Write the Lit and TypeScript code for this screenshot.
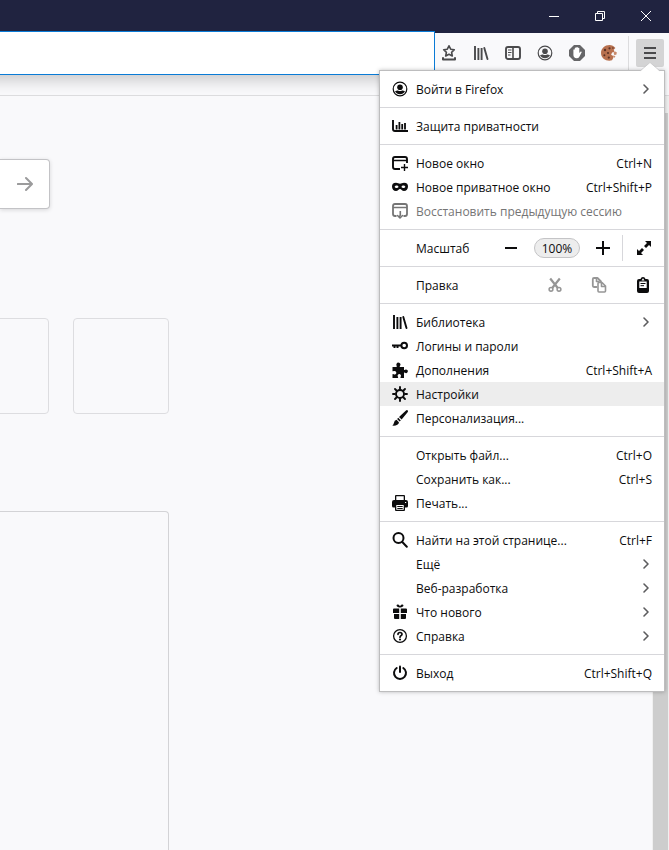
import { LitElement, html, svg, css, nothing, TemplateResult } from "lit";
import { customElement, property } from "lit/decorators.js";

const stroke = (d: string, width = 2) =>
  svg`<path d=${d} fill="none" stroke="currentColor" stroke-width=${width}></path>`;
const roundStroke = (d: string, width = 2) =>
  svg`<path d=${d} fill="none" stroke="currentColor" stroke-width=${width} stroke-linecap="round" stroke-linejoin="round"></path>`;
const fill = (d: string) => svg`<path d=${d} fill="currentColor" fill-rule="evenodd"></path>`;

const ICONS: Record<string, TemplateResult | TemplateResult[]> = {
  minimize: stroke("M3 8.5h10", 1),
  restore: stroke("M3.5 5.5h7v7h-7zM5.500 5.500v-2h7v7h-2", 1),
  close: stroke("M3 3l10 10M13 3L3 13", 1),
  bookmark: [
    roundStroke("M8 .8L9.700 4.200 13.300 4.700 10.600 7.300 11.300 11 8 9.200 4.700 11 5.400 7.300 2.700 4.700 6.300 4.200Z", 1.6),
    roundStroke("M2 13v1.600h12V13", 2),
  ],
  library: [stroke("M2 1v14M5.400 3v12M8.600 3v12", 1.9), roundStroke("M11.300 3L14.500 14", 1.9)],
  sidebar: [
    roundStroke("M3 2h10a2 2 0 0 1 2 2v8a2 2 0 0 1-2 2H3a2 2 0 0 1-2-2V4a2 2 0 0 1 2-2z", 1.9),
    stroke("M8 2v12", 1.6),
    stroke("M3 5h3.500M3 7.500h3.500M3 10h2.500", 1),
  ],
  account: [
    svg`<circle cx="8" cy="8" r="6.800" fill="none" stroke="currentColor" stroke-width="1.200"></circle>`,
    svg`<circle cx="8" cy="6.200" r="2.800" fill="currentColor"></circle>`,
    fill("M3 10.300c1-.8 2-.9 3-.9.600.400 1.300.600 2 .600s1.400-.2 2-.600c1 0 2 .1 3 .9-1 1.800-2.800 3-5 3s-4-1.200-5-3z"),
  ],
  blocker: [
    svg`<path d="M5 0h6l5 5v6l-5 5H5l-5-5V5z" fill="#666668"></path>`,
    svg`<path d="M4.400 8V4.800q.7-.9 1.400 0V3q.8-.8 1.500 0v-.7q.8-.7 1.500 0V3q.8-.7 1.500 0v5l1.400-1.500q1-.2 1 .7l-2.200 4.200q-.9 1.900-2.900 1.900-3.200-.2-3.200-3.300z" fill="#fff"></path>`,
  ],
  cookie: [
    svg`<path d="M8.500 0c2.300.1 4.400 1.200 5.900 3l-1.700 1.700.9 2-2.500.7-1 2.300 2 1.300.3 1.800-1.400 2.500C6 16.800 0 14 0 8 0 3.500 4 0 8.500 0z" fill="#b8714f"></path>`,
    svg`<path d="M12.500 7.500l1.800-1 1.600 1-.6 2.300-2 .2zM11.500 10.500l3 .6-1.300 2z" fill="#c98a6b"></path>`,
    svg`<g fill="#5a3226"><circle cx="4" cy="5" r="1.200"></circle><circle cx="8.500" cy="3.300" r="1.100"></circle><circle cx="7" cy="8" r="1.100"></circle><circle cx="3.400" cy="10.300" r="1"></circle><circle cx="7.800" cy="12.600" r="1.100"></circle><circle cx="11.900" cy="3" r=".8"></circle></g>`,
  ],
  menu: stroke("M2 3h12M2 8h12M2 13h12", 2),
  go: roundStroke("M.8 8h14M9 2L15 8 9 14", 2),
  chevron: roundStroke("M6 4l4 4-4 4", 1.6),
  chart: [stroke("M1 2v9q0 2 2 2H16", 1.9), stroke("M4.600 7v4.500M7.400 4v7.500M10.200 6v5.500M13 5v6.500", 1.8)],
  newWindow: [
    stroke("M8 14H3q-2 0-2-2V4q0-2 2-2h10q2 0 2 2v4", 1.9),
    stroke("M1 5.500h14", 1.5),
    stroke("M12.500 9v7M9 12.500h7", 1.4),
  ],
  mask: fill("M4 3.800c1.600 0 2.800.9 4 .9s2.400-.9 4-.9c3 0 4 1.600 4 3.600 0 2.600-1.600 4.600-4 4.600-2 0-2.800-2-4-2s-2 2-4 2c-2.400 0-4-2-4-4.600 0-2 1-3.600 4-3.600zM2.600 7.800c.6 1 1.200 1.300 2 1.300.9 0 1.500-.4 2-1.100-.5-.9-1.200-1.400-2.100-1.400-.8 0-1.400.4-1.900 1.200zM13.400 7.800c-.6 1-1.200 1.300-2 1.300-.9 0-1.500-.4-2-1.100.5-.9 1.200-1.400 2.100-1.400.8 0 1.400.4 1.900 1.200z"),
  restoreSession: [
    stroke("M4.500 13H3q-2 0-2-2V3q0-2 2-2h10q2 0 2 2v8q0 2-2 2h-1.500", 1.8),
    stroke("M1 4.500h14", 1.5),
    stroke("M8.300 8v4q0 1.500-1.500 1.500", 1.6),
    roundStroke("M5.500 12.500L8 15l2.500-2.500", 1.500),
  ],
  minus: stroke("M2 8h12", 2),
  plus: stroke("M1 8h14M8 1v14", 2),
  fullscreen: [
    fill("M9 1h6v6l-2-2L10 8 8 6l3-3zM7 15H1V9l2 2L6 8l2 2-3 3z"),
  ],
  cut: [
    stroke("M3.200 1.500L10.800 11M12.800 1.500L5.200 11", 2.2),
    svg`<circle cx="4" cy="12.300" r="1.900" fill="none" stroke="currentColor" stroke-width="1.500"></circle><circle cx="12" cy="12.300" r="1.900" fill="none" stroke="currentColor" stroke-width="1.500"></circle>`,
  ],
  copy: [
    roundStroke("M5.500 10H3q-1.200 0-1.200-1.200V2.200Q1.800 1 3 1h3.500L10 4.500", 1.8),
    roundStroke("M8 5.500h3l3.500 3.500v5q0 1-1 1H8q-1 0-1-1V6.500q0-1 1-1zM10.500 6v3.500H14M5.500 1.500v3H8", 1.600),
  ],
  paste: [
    fill("M4 2h1.500Q6 0 8 0t2.500 2H12q2 0 2 2v10q0 2-2 2H4q-2 0-2-2V4q0-2 2-2zM4.300 4.500v6.500h7.400V4.500zM8 1.300L6.500 3.500h3z"),
    stroke("M5.500 6.500h5M5.500 8.700h3.500", 1),
  ],
  key: [
    svg`<circle cx="12.200" cy="7.500" r="2.800" fill="none" stroke="currentColor" stroke-width="2"></circle>`,
    fill("M0 6.500h9.500v2H6.500V10H4.500V8.500H3.500V10H1.500V8.500H0z"),
  ],
  puzzle: fill("M4.400 2.200a2 2 0 1 1 3.600 1.600q-.4.600-.2 1.200H12v3q.5.300 1-.2a1.800 1.800 0 1 1 0 3q-.5-.5-1-.2V16H8.600q-.3-.9.200-1.400a1.700 1.700 0 1 0-3 0q.5.5.2 1.400H.5v-3.800q.6-.3 1.200.1a1.800 1.800 0 1 0 0-3.200Q1 9.500.5 9.200V5h4q.5-.6.100-1.200-.4-.6-.2-1.600z"),
  gear: [
    svg`<circle cx="8" cy="8" r="4" fill="none" stroke="currentColor" stroke-width="1.900"></circle>`,
    roundStroke("M8 3V1M8 15v-2M3 8H1M15 8h-2M4.500 4.500L3 3M13 13l-1.500-1.500M4.500 11.500L3 13M13 3l-1.500 1.500", 1.900),
  ],
  brush: fill("M14 .5q1-.8 1.800 0 .5.8-.2 1.700L9.600 9.500 7 7zM6.300 7.800l2.500 2.600-1.100 1.200-2.600-2.600zM4.500 9.700l2.400 2.500q.2 1.600-1.600 2.600Q3 16 .3 15.500q1.300-1 1.600-2.600.4-2.900 2.600-3.200z"),
  print: fill("M4 0h8q1 0 1 1v4h1q2 0 2 2v4q0 1.500-1.500 1.500H13V15q0 1-1 1H4q-1 0-1-1v-2.500H1.500Q0 12.500 0 11V7q0-2 2-2h1V1q0-1 1-1zM4.300 1.300V5h7.400V1.300zM4.300 10v4.700h7.400V10zM5.300 11h5.400v1H5.300zM5.300 13h5.400v.9H5.300zM13 7v1h1.200V7z"),
  search: [
    svg`<circle cx="6.500" cy="6" r="5" fill="none" stroke="currentColor" stroke-width="2"></circle>`,
    roundStroke("M10.300 10l4.500 4.700", 2),
  ],
  gift: fill("M8 2.200C7 .2 4.800 0 4.500 1.400 4.600 2.500 6 3 7.600 3.400h.8c1.600-.4 3-.9 3.100-2C11.200 0 9 .2 8 2.200zM2 4.500h5.200V9H1V5.500q0-1 1-1zM8.800 4.500H14q1 0 1 1V9H8.800zM2 10h5.200v5H3q-1 0-1-1zM8.800 10H14v4q0 1-1 1H8.800z"),
  help: [
    svg`<circle cx="8" cy="8" r="6.400" fill="none" stroke="currentColor" stroke-width="1.300"></circle>`,
    roundStroke("M6 6.300Q6 4.500 8 4.500t2 1.700Q10 7.200 8.900 7.800 8 8.300 8 9.200", 1.700),
    svg`<circle cx="8" cy="11.500" r="1.100" fill="currentColor"></circle>`,
  ],
  power: [roundStroke("M4.700 3A6 6 0 1 0 11.300 3", 2), roundStroke("M8 1.500v5.500", 2)],
};

const icon = (name?: string) =>
  html`<svg class="icon" viewBox="0 0 16 16" aria-hidden="true">${name ? ICONS[name] : nothing}</svg>`;

interface Item {
  label: string;
  icon?: string;
  keys?: string;
  sub?: boolean;
  disabled?: boolean;
  active?: boolean;
  kind?: "zoom" | "edit";
}

const GROUPS: Item[][] = [
  [{ label: "Войти в Firefox", icon: "account", sub: true }],
  [{ label: "Защита приватности", icon: "chart" }],
  [
    { label: "Новое окно", icon: "newWindow", keys: "Ctrl+N" },
    { label: "Новое приватное окно", icon: "mask", keys: "Ctrl+Shift+P" },
    { label: "Восстановить предыдущую сессию", icon: "restoreSession", disabled: true },
  ],
  [{ label: "Масштаб", kind: "zoom" }],
  [{ label: "Правка", kind: "edit" }],
  [
    { label: "Библиотека", icon: "library", sub: true },
    { label: "Логины и пароли", icon: "key" },
    { label: "Дополнения", icon: "puzzle", keys: "Ctrl+Shift+A" },
    { label: "Настройки", icon: "gear", active: true },
    { label: "Персонализация...", icon: "brush" },
  ],
  [
    { label: "Открыть файл...", keys: "Ctrl+O" },
    { label: "Сохранить как...", keys: "Ctrl+S" },
    { label: "Печать...", icon: "print" },
  ],
  [
    { label: "Найти на этой странице...", icon: "search", keys: "Ctrl+F" },
    { label: "Ещё", sub: true },
    { label: "Веб-разработка", sub: true },
    { label: "Что нового", icon: "gift", sub: true },
    { label: "Справка", icon: "help", sub: true },
  ],
  [{ label: "Выход", icon: "power", keys: "Ctrl+Shift+Q" }],
];

const base = css`
  * {
    box-sizing: border-box;
  }
  button,
  input {
    font: inherit;
    color: inherit;
    border: 0;
    margin: 0;
    padding: 0;
    background: none;
    outline: none;
  }
  .icon {
    display: block;
    flex: none;
    width: 16px;
    height: 16px;
  }
`;

@customElement("app-menu")
class AppMenu extends LitElement {
  @property({ attribute: false }) groups: Item[][] = [];

  static styles = [
    base,
    css`
      :host {
        display: block;
        width: 286px;
        background: #fff;
        border: 1px solid #bdbdbe;
        box-shadow: 0 0 4px rgba(0, 0, 0, 0.25);
        color: #0c0c0d;
      }
      .arrow {
        position: absolute;
        top: -9px;
        right: 4px;
        width: 20px;
        height: 10px;
        display: block;
      }
      .group {
        padding: 6px 0;
      }
      .group + .group {
        border-top: 1px solid #d7d7db;
      }
      .row {
        display: flex;
        align-items: center;
        gap: 8px;
        width: 100%;
        height: 24px;
        padding: 0 12px;
        text-align: left;
        white-space: nowrap;
      }
      .row.split {
        padding-right: 0;
      }
      .row:disabled {
        color: #757575;
      }
      .row.active {
        background: #ededed;
      }
      .label,
      .keys {
        padding-top: 2px;
      }
      .label {
        flex: 1;
      }
      .more {
        color: #5c5c5e;
        margin-right: -2px;
      }
      .tools {
        display: flex;
        align-items: center;
        gap: 2px;
      }
      .tools.zoom {
        gap: 11px;
      }
      .tool {
        display: grid;
        place-items: center;
        width: 42px;
        height: 24px;
      }
      .zoom .tool {
        width: 24px;
      }
      .zoom .tool.full {
        width: 42px;
        height: 26px;
        margin-left: -4px;
        border-left: 1px solid #d7d7db;
      }
      .tool:disabled {
        color: #969696;
      }
      .level {
        width: 46px;
        height: 20px;
        border: 1px solid #c4c4c6;
        border-radius: 10px;
        background: #ededed;
        line-height: 20px;
        text-align: center;
      }
    `,
  ];

  private zoomTools() {
    return html`<div class="tools zoom">
      <button class="tool" aria-label="Уменьшить">${icon("minus")}</button>
      <button class="level">100%</button>
      <button class="tool" aria-label="Увеличить">${icon("plus")}</button>
      <button class="tool full" aria-label="Во весь экран">${icon("fullscreen")}</button>
    </div>`;
  }

  private editTools() {
    return html`<div class="tools">
      <button class="tool" disabled aria-label="Вырезать">${icon("cut")}</button>
      <button class="tool" disabled aria-label="Копировать">${icon("copy")}</button>
      <button class="tool" aria-label="Вставить">${icon("paste")}</button>
    </div>`;
  }

  private row(item: Item) {
    if (item.kind) {
      return html`<div class="row split">
        ${icon()}<span class="label">${item.label}</span>
        ${item.kind === "zoom" ? this.zoomTools() : this.editTools()}
      </div>`;
    }
    return html`<button class="row ${item.active ? "active" : ""}" ?disabled=${item.disabled}>
      ${icon(item.icon)}<span class="label">${item.label}</span>
      ${item.keys ? html`<span class="keys">${item.keys}</span>` : nothing}
      ${item.sub ? html`<span class="more">${icon("chevron")}</span>` : nothing}
    </button>`;
  }

  render() {
    return html`
      <svg class="arrow" viewBox="0 0 20 10" aria-hidden="true">
        <path d="M0 9.500L10 .5 20 9.500V10H0z" fill="#fff"></path>
        <path d="M0 9L10 .5 20 9" fill="none" stroke="#c4c4c5" stroke-width=".7"></path>
      </svg>
      ${this.groups.map((g) => html`<div class="group">${g.map((i) => this.row(i))}</div>`)}
    `;
  }
}

@customElement("app-root")
class AppRoot extends LitElement {
  static styles = [
    base,
    css`
      :host {
        display: flex;
        flex-direction: column;
        position: relative;
        min-height: 100vh;
        overflow: hidden;
        background: #f9f9fb;
        font: 12px/16px "Open Sans", "Noto Sans", sans-serif;
      }
      .titlebar {
        display: flex;
        justify-content: flex-end;
        height: 33px;
        background: #202340;
        color: #fff;
      }
      .win {
        display: grid;
        place-items: center;
        width: 46px;
        height: 32px;
      }
      .toolbar {
        display: flex;
        align-items: flex-start;
        height: 63px;
        padding-right: 5px;
        border-bottom: 1px solid #dcdcde;
        color: #4a4a4c;
      }
      .address {
        flex: 1;
        min-width: 0;
        height: 44px;
        margin-top: -2px;
        margin-left: -24px;
        padding: 0 12px 0 36px;
        background: #fff;
        border: 1px solid #0a7bd6;
        box-shadow: 0 5px 16px rgba(0, 0, 0, 0.2);
        clip-path: inset(0 0 -24px 0);
      }
      .actions {
        display: flex;
        gap: 4px;
        padding-top: 6px;
      }
      .action {
        display: grid;
        place-items: center;
        width: 28px;
        height: 28px;
      }
      .divider {
        width: 1px;
        height: 34px;
        margin: 3px 7px 0 5px;
        background: #dcdcde;
      }
      .action.open {
        margin-top: 6px;
        border-radius: 2px;
        background: #d4d4d5;
      }
      .body {
        flex: 1;
        display: flex;
        justify-content: space-between;
      }
      .page {
        display: flex;
        flex-direction: column;
        width: 169px;
        padding-top: 63px;
      }
      .search {
        display: flex;
        width: 50px;
        height: 50px;
        background: #fff;
        border: 1px solid #c3c3c6;
        border-left: 0;
        border-radius: 0 4px 4px 0;
        box-shadow: 0 1px 4px rgba(0, 0, 0, 0.14);
      }
      .query {
        flex: 1;
        min-width: 0;
      }
      .go {
        display: grid;
        place-items: center;
        width: 48px;
        color: #9b9b9c;
      }
      .tiles {
        display: flex;
        justify-content: flex-end;
        gap: 24px;
        margin-top: 109px;
        overflow: hidden;
      }
      .tile {
        flex: none;
        width: 96px;
        height: 96px;
        border: 1px solid #dddde0;
        border-radius: 4px;
      }
      .card {
        flex: 1;
        margin-top: 97px;
        border: 1px solid #d3d3d6;
        border-width: 1px 1px 0 0;
        border-radius: 0 4px 0 0;
      }
      .scrollbar {
        display: flex;
        width: 17px;
        padding: 17px 1px 0;
        background: #f0f0f0;
      }
      .thumb {
        flex: 1;
        background: #cdcdcd;
      }
      .menu {
        position: absolute;
        top: 70px;
        right: 4px;
      }
    `,
  ];

  private actions = [
    ["bookmark", "Закладки"],
    ["library", "Библиотека"],
    ["sidebar", "Боковая панель"],
    ["account", "Аккаунт"],
    ["blocker", "Блокировщик"],
    ["cookie", "Куки"],
  ];

  render() {
    return html`
      <header>
        <div class="titlebar">
          <button class="win" aria-label="Свернуть">${icon("minimize")}</button>
          <button class="win" aria-label="Восстановить">${icon("restore")}</button>
          <button class="win" aria-label="Закрыть">${icon("close")}</button>
        </div>
        <div class="toolbar">
          <input class="address" type="text" aria-label="Адрес" />
          <div class="actions">
            ${this.actions.map(
              ([name, label]) => html`<button class="action" aria-label=${label}>${icon(name)}</button>`
            )}
          </div>
          <div class="divider"></div>
          <button class="action open" aria-label="Меню">${icon("menu")}</button>
        </div>
      </header>
      <div class="body">
        <main class="page">
          <form class="search">
            <input class="query" type="text" aria-label="Поиск" />
            <button class="go" type="button" aria-label="Найти">${icon("go")}</button>
          </form>
          <div class="tiles"><div class="tile"></div><div class="tile"></div></div>
          <div class="card"></div>
        </main>
        <div class="scrollbar"><div class="thumb"></div></div>
      </div>
      <app-menu class="menu" .groups=${GROUPS}></app-menu>
    `;
  }
}
